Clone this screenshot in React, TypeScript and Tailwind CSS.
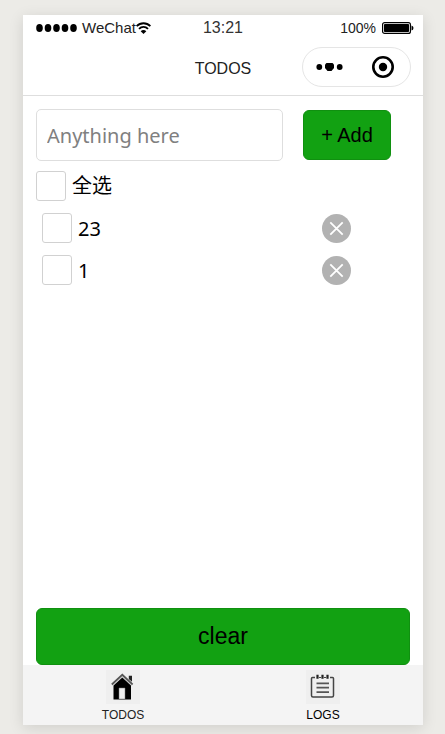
import { useState } from "react";

type Todo = { id: number; name: string; completed: boolean };

const initialTodos: Todo[] = [
  { id: 1, name: "23", completed: false },
  { id: 2, name: "1", completed: false },
];

const boxClass =
  "block size-[30px] shrink-0 appearance-none rounded-[3px] border border-[#d1d1d1] bg-white checked:bg-[#12a112]";

function SignalDots() {
  return (
    <svg className="h-2 w-[41px]" viewBox="0 0 41 8" aria-hidden="true">
      {[3.5, 12, 20.5, 29, 37.5].map((cx) => (
        <ellipse key={cx} cx={cx} cy="4" rx="3.3" ry="3.9" />
      ))}
    </svg>
  );
}

function WifiIcon() {
  return (
    <svg className="h-3 w-[15px]" viewBox="0 0 15 12" fill="none" stroke="#000" aria-hidden="true">
      <path d="M.6 4.2C4.5.2 10.500.2 14.400 4.200" strokeWidth="1.900" />
      <path d="M3 6.900c2.500-2.600 6.500-2.600 9 0" strokeWidth="1.800" />
      <path d="M4.700 9.200c1.500-1.700 4.100-1.700 5.600 0L7.500 11.900z" fill="#000" stroke="none" />
    </svg>
  );
}

function BatteryIcon() {
  return (
    <svg className="h-3 w-8" viewBox="0 0 32 12" aria-hidden="true">
      <rect x=".6" y=".6" width="27.800" height="10.800" rx="2" fill="#fff" stroke="#000" strokeWidth="1.200" />
      <rect x="2" y="2" width="25" height="8" rx=".8" />
      <path d="M29.500 3.500q2 .5 2 2.500t-2 2.500z" />
    </svg>
  );
}

function MoreIcon() {
  return (
    <svg className="h-2 w-[27px]" viewBox="0 0 27 8" aria-hidden="true">
      <circle cx="3.300" cy="4" r="2.900" />
      <path d="M10.500 0h6l1.500 1.500v3.500L15.500 8h-4L9 5V1.500z" />
      <circle cx="23.700" cy="4" r="2.900" />
    </svg>
  );
}

function TargetIcon() {
  return (
    <svg className="size-[22px]" viewBox="0 0 22 22" aria-hidden="true">
      <circle cx="11" cy="11" r="9.700" fill="none" stroke="#000" strokeWidth="2.600" />
      <circle cx="11" cy="11" r="4.200" />
    </svg>
  );
}

function RemoveIcon() {
  return (
    <svg className="size-[29px]" viewBox="0 0 29 29" aria-hidden="true">
      <circle cx="14.500" cy="14.500" r="14.500" fill="#b2b2b2" />
      <path d="M8.300 8.300l12.400 12.400M20.700 8.300L8.300 20.700" stroke="#fff" strokeWidth="1.800" />
    </svg>
  );
}

function HouseIcon() {
  return (
    <svg className="size-[34px] bg-[#efefef]" viewBox="0 0 34 34" aria-hidden="true">
      <path d="M22.800 5.800h3.200v6l-3.200-2.700z" fill="#222" />
      <path d="M7.500 15.500L16.300 7.500l8.700 8v14H7.500z" />
      <path d="M5.800 14.500L16.300 4.800l10.300 9.700" fill="none" stroke="#555" strokeWidth="1.800" />
      <path d="M6.800 15.300L16.300 6.600l9.500 8.700" fill="none" stroke="#aaa" strokeWidth=".6" />
      <path d="M13 18h6v11h-6z" fill="#efefef" stroke="#777" strokeWidth=".5" />
    </svg>
  );
}

function NotepadIcon() {
  return (
    <svg className="size-[34px] bg-[#efefef]" viewBox="0 0 34 34" fill="none" aria-hidden="true">
      <path d="M9 7.500H6.500Q5.500 7.500 5.500 8.500v17q0 1.500 1.500 1.500h19q1.500 0 1.500-1.500v-17q0-1-1-1H24" stroke="#444" strokeWidth="1.500" />
      <path d="M13 7.500h2M18 7.500h2" stroke="#444" />
      <path d="M11.500 4.800v4M16.500 4.800v4M21.500 4.800v4" stroke="#222" strokeWidth="2.200" />
      <path d="M10.500 13.300h12.500M10.500 17.700h12.500M10.500 22.100h12.500" stroke="#555" strokeWidth="1.700" />
    </svg>
  );
}

export default function App() {
  const [todos, setTodos] = useState(initialTodos);
  const [draft, setDraft] = useState("");
  const allDone = todos.length > 0 && todos.every((t) => t.completed);

  const addTodo = () => {
    if (!draft.trim()) return;
    setTodos([...todos, { id: Date.now(), name: draft, completed: false }]);
    setDraft("");
  };

  return (
    <div className="flex min-h-screen flex-col bg-[#ecebe7] pt-[15px] pr-[22px] pb-[9px] pl-[23px] font-['Liberation_Sans',Arial,sans-serif] text-black">
      <div className="flex grow flex-col bg-white shadow-[0_3px_14px_rgba(0,0,0,0.12)]">
        <header className="border-b border-[#dedede]">
          <div className="grid h-[26px] grid-cols-[1fr_auto_1fr] items-center pr-[9px] pl-[9px]">
            <div className="flex items-center pl-1">
              <SignalDots />
              <span className="ml-[5px] text-[15px] leading-6 text-[#222]">WeChat</span>
              <WifiIcon />
            </div>
            <time className="text-base leading-6 text-[#333]">13:21</time>
            <div className="flex items-center justify-end gap-[6px]">
              <span className="text-sm leading-6 text-[#222]">100%</span>
              <BatteryIcon />
            </div>
          </div>
          <div className="grid h-[54px] grid-cols-[1fr_auto_1fr] items-center px-3 pb-[2px]">
            <h1 className="col-start-2 pt-1 text-base leading-6 text-[#222]">TODOS</h1>
            <div className="flex h-10 w-[109px] items-center justify-between justify-self-end rounded-full border border-[#e5e5e5] pr-4 pl-[13px]">
              <button type="button" aria-label="More">
                <MoreIcon />
              </button>
              <button type="button" aria-label="Close">
                <TargetIcon />
              </button>
            </div>
          </div>
        </header>

        <main className="flex grow flex-col px-[13px] pt-[13px] font-['Noto_Sans','Noto_Sans_CJK_SC',sans-serif] text-xl">
          <div className="flex items-center gap-5 pr-[19px]">
            <input
              type="text"
              aria-label="New todo"
              placeholder="Anything here"
              value={draft}
              onChange={(e) => setDraft(e.target.value)}
              className="h-[52px] min-w-0 grow rounded-[5px] border border-[#dedede] px-[10px] placeholder:text-[#808080]"
            />
            <button
              type="button"
              onClick={addTodo}
              className="h-[50px] w-[88px] shrink-0 rounded-[6px] border border-[#109010] bg-[#12a112] font-['Liberation_Sans',Arial,sans-serif] text-xl"
            >
              + Add
            </button>
          </div>

          <label className="mt-[10px] flex items-center gap-[6px] self-start">
            <input
              type="checkbox"
              checked={allDone}
              onChange={() => setTodos(todos.map((t) => ({ ...t, completed: !allDone })))}
              className={boxClass}
            />
            <span lang="zh-CN" className="pb-[2px] font-['Noto_Sans_CJK_SC',sans-serif] leading-7">全选</span>
          </label>

          <ul className="mt-3 mb-4 flex flex-col gap-3 pr-[59px] pl-[6px]">
            {todos.map((todo) => (
              <li key={todo.id} className="flex items-center justify-between">
                <label className="flex items-center gap-[6px]">
                  <input
                    type="checkbox"
                    checked={todo.completed}
                    onChange={() =>
                      setTodos(todos.map((t) => (t.id === todo.id ? { ...t, completed: !t.completed } : t)))
                    }
                    className={boxClass}
                  />
                  <span className="pt-[2px] leading-7">{todo.name}</span>
                </label>
                <button
                  type="button"
                  aria-label={`Remove ${todo.name}`}
                  onClick={() => setTodos(todos.filter((t) => t.id !== todo.id))}
                >
                  <RemoveIcon />
                </button>
              </li>
            ))}
          </ul>

          <button
            type="button"
            onClick={() => setTodos(todos.filter((t) => !t.completed))}
            className="mt-auto h-[57px] rounded-[6px] border border-[#109010] bg-[#12a112] font-['Liberation_Sans',Arial,sans-serif] text-[23px]"
          >
            clear
          </button>
        </main>

        <nav className="grid h-[60px] grid-cols-2 bg-[#f4f4f4] text-xs leading-[22px]">
          <a href="#todos" className="flex flex-col items-center pt-[5px] text-[#222]">
            <HouseIcon />
            TODOS
          </a>
          <a href="#logs" className="flex flex-col items-center pt-[5px]">
            <NotepadIcon />
            LOGS
          </a>
        </nav>
      </div>
    </div>
  );
}
